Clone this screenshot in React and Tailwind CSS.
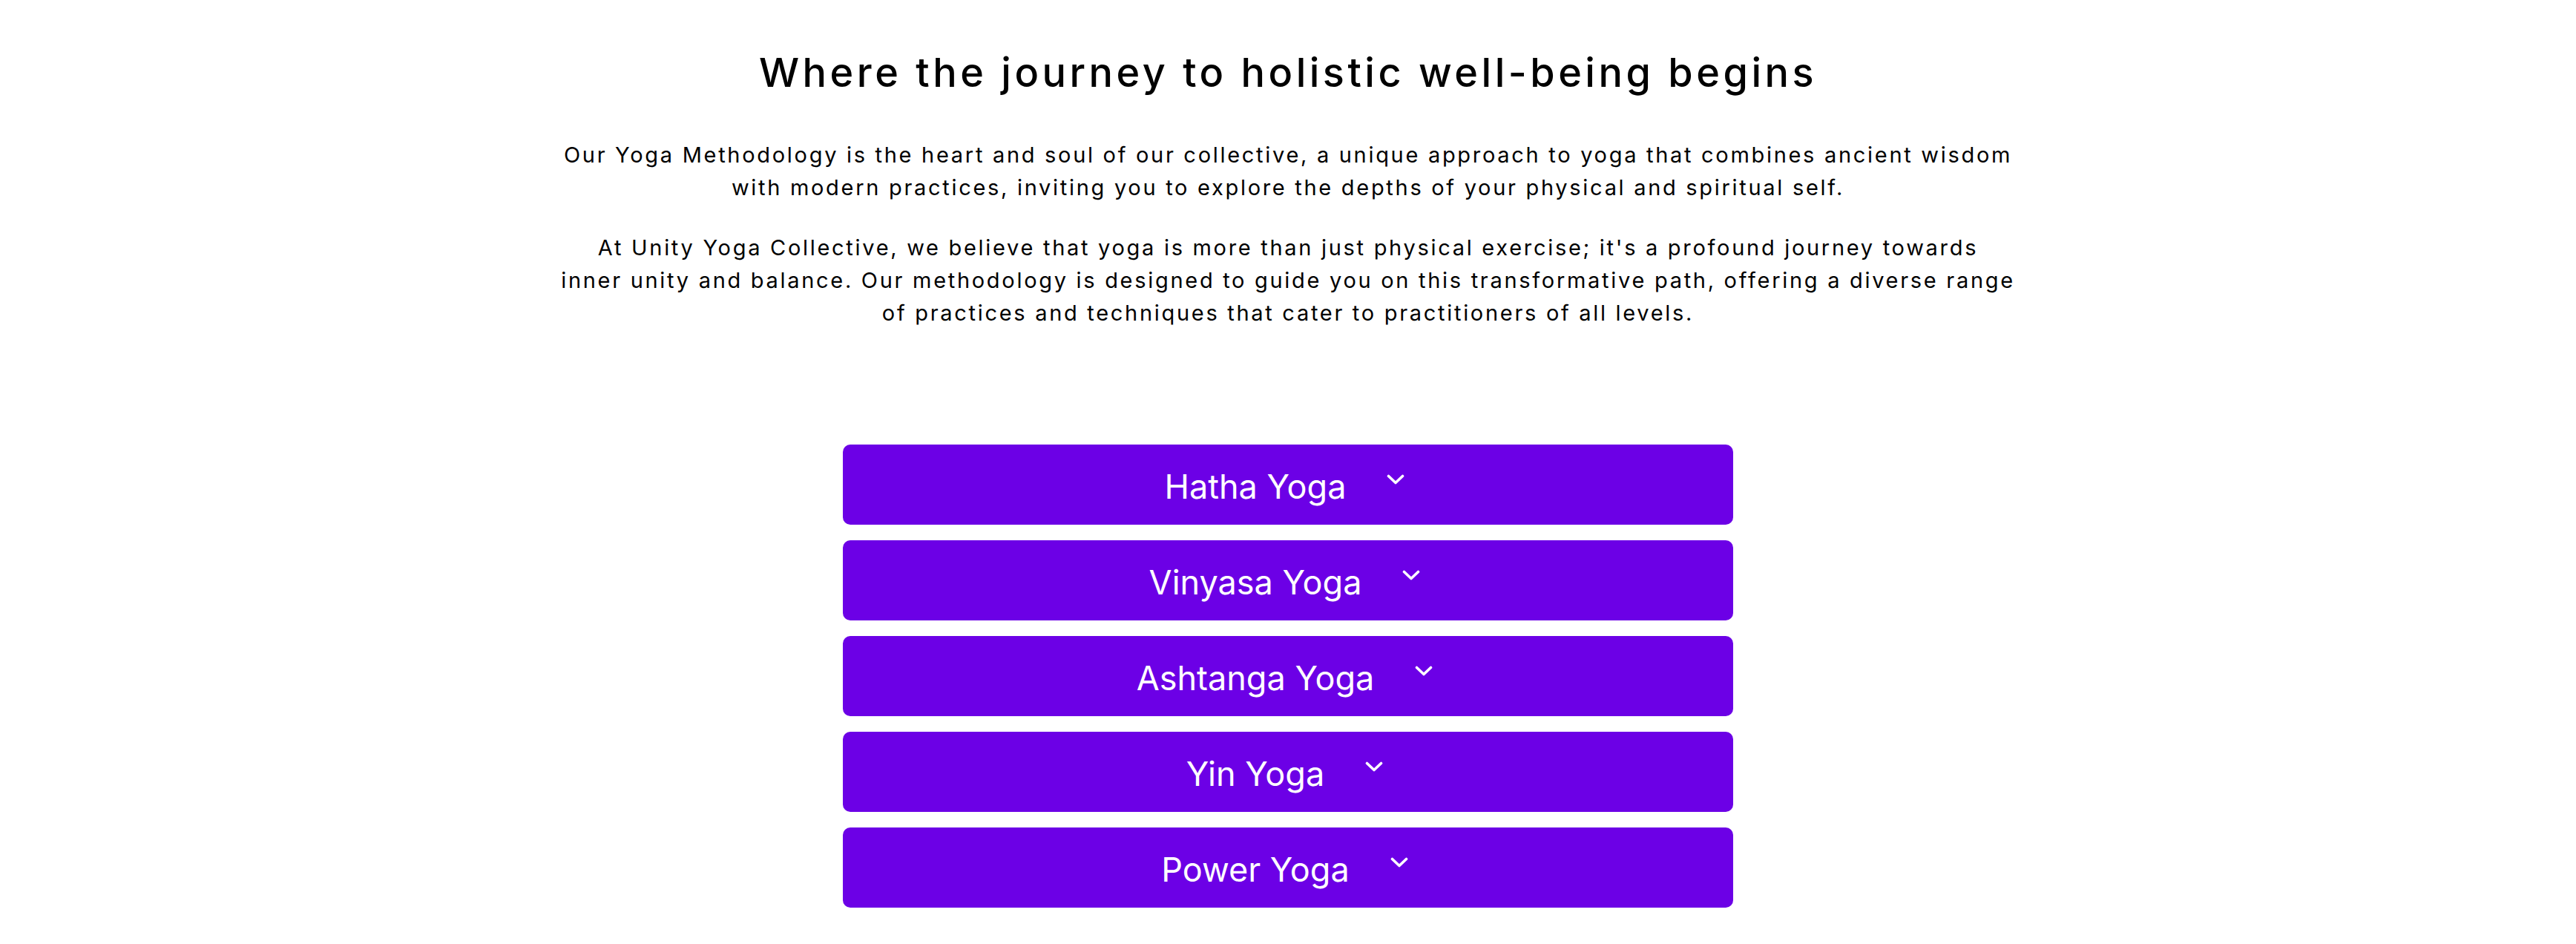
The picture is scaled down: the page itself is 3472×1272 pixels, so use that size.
import React from "react";

const items = ["Hatha Yoga", "Vinyasa Yoga", "Ashtanga Yoga", "Yin Yoga", "Power Yoga"];

function Chevron() {
  return (
    <svg
      className="absolute left-full top-[10px] ml-[55px]"
      width="24"
      height="15"
      viewBox="0 0 24 15"
      fill="none"
      stroke="white"
      strokeWidth="3.6"
      strokeLinecap="round"
      strokeLinejoin="round"
    >
      <polyline points="2.5,2.5 12,11.5 21.5,2.5" />
    </svg>
  );
}

export default function App() {
  return (
    <div className="min-h-[1272px] w-full bg-white font-['Inter','Noto_Sans',sans-serif] text-black flex flex-col items-center">
      <h1 className="pt-[65px] text-[54px] leading-[66px] tracking-[4.5px] font-medium text-center">
        Where the journey to holistic well-being begins
      </h1>
      <p className="mt-[56px] text-[29px] leading-[44px] tracking-[2.7px] text-center">
        Our Yoga Methodology is the heart and soul of our collective, a unique approach to yoga that combines ancient wisdom
        <br />
        with modern practices, inviting you to explore the depths of your physical and spiritual self.
      </p>
      <p className="mt-[37px] text-[29px] leading-[44px] tracking-[2.7px] text-center">
        At Unity Yoga Collective, we believe that yoga is more than just physical exercise; it's a profound journey towards
        <br />
        inner unity and balance. Our methodology is designed to guide you on this transformative path, offering a diverse range
        <br />
        of practices and techniques that cater to practitioners of all levels.
      </p>
      <div className="mt-[155px] w-[1200px] flex flex-col gap-[21px]">
        {items.map((t) => (
          <button
            key={t}
            className="h-[108px] w-full rounded-[10px] bg-[#6c00e6] text-white flex items-center justify-center pt-[5px] pr-[88px]"
          >
            <span className="relative text-[45px] leading-[54px]">
              {t}
              <Chevron />
            </span>
          </button>
        ))}
      </div>
    </div>
  );
}
